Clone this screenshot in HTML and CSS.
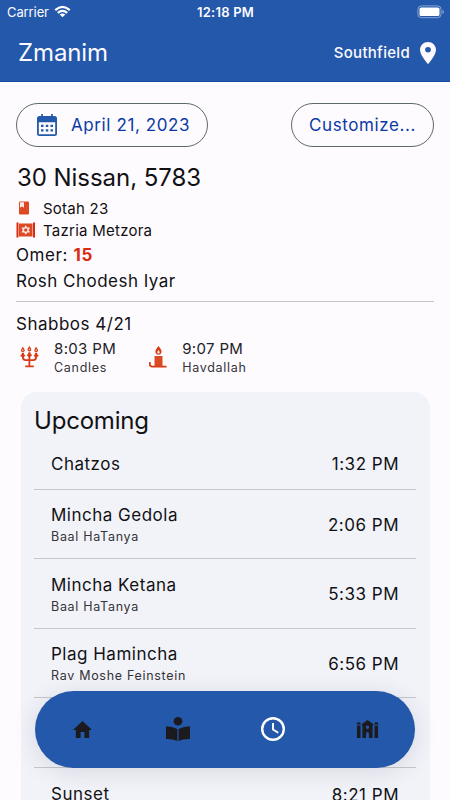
FILE: index.html
```html
<!DOCTYPE html>
<html lang="en">
<head>
<meta charset="utf-8">
<title>Zmanim</title>
<link rel="stylesheet" href="styles.css">
</head>
<body>
<div class="screen">
  <header class="header">
    <div class="status">
      <div class="carrier"><span>Carrier</span>
        <svg width="17" height="13" viewBox="0 0 18 13" fill="none" stroke="#fff" stroke-width="2.300"><path d="M1.300 5Q9-1.800 16.700 5M4 8Q9 3.600 14 8"/><path d="M9 12.600L6 9.600Q9 7.400 12 9.600Z" fill="#fff" stroke="none"/></svg>
      </div>
      <span class="clock">12:18 PM</span>
      <svg class="battery" width="28" height="14" viewBox="0 0 28 14"><rect x=".9" y=".9" width="23.200" height="11.800" rx="3.600" fill="none" stroke="#8aa5d3"/><rect x="2.500" y="2.500" width="20" height="8.600" rx="1.600" fill="#fff"/><path d="M25.500 4.800q1.500.8 1.500 2.100t-1.500 2.100z" fill="#8aa5d3"/></svg>
    </div>
    <div class="titlebar">
      <h1>Zmanim</h1>
      <div class="place"><span>Southfield</span>
        <svg width="16" height="22" viewBox="5 2 14 20" preserveAspectRatio="none"><path fill="#fdf8fd" d="M12 2C8.130 2 5 5.130 5 9c0 5.250 7 13 7 13s7-7.750 7-13c0-3.870-3.130-7-7-7zm0 9.500a2.500 2.500 0 0 1 0-5 2.500 2.500 0 0 1 0 5z"/></svg>
      </div>
    </div>
  </header>
  <main class="content">
    <div class="actions">
      <button class="pill date">
        <svg width="20" height="22" viewBox="0 0 20 22"><path fill="#2358aa" fill-rule="evenodd" d="M4.200 0h1.700v2h8.200V0h1.700v2H17.500Q20 2 20 4.500V19.500Q20 22 17.500 22H2.500Q0 22 0 19.500V4.500Q0 2 2.500 2H4.200zM1.800 8.300V20.200H18.200V8.300z"/><path fill="#2358aa" d="M4 10.800h2.500v2.200H4zM8.800 10.800h2.500v2.200H8.800zM13.500 10.800h2.500v2.200h-2.500zM4 15.200h2.500v2.200H4zM8.800 15.200h2.500v2.200H8.800zM13.500 15.200h2.500v2.200h-2.500z"/></svg>
        <span>April 21, 2023</span>
      </button>
      <button class="pill custom"><span>Customize...</span></button>
    </div>
    <h2 class="hebrew"><span>30 Nissan, 5783</span></h2>
    <div class="study">
      <svg width="20" height="14" viewBox="0 0 20 14"><path fill="#db4a22" d="M4 .5h8Q13 .5 13 1.500v11q0 1-1 1h-8Q3 13.500 3 12.500V1.500Q3 .5 4 .5z"/><path fill="#fce8e6" d="M4 1.200h4v5.600L6 5.500 4 6.800z"/></svg>
      <span>Sotah 23</span>
    </div>
    <div class="study torah">
      <svg width="20" height="16" viewBox="0 0 20 16"><path fill="#d92b10" d="M.5.500h2v15h-2zM17 .5h2v15h-2z"/><path fill="#db4a22" d="M3 1.500h13.500v13H3z"/><path fill="#fce8e6" d="M9.750 3.200l1.500 2.300h2.800L12.700 8l1.350 2.500h-2.800l-1.500 2.300-1.500-2.300h-2.800L6.800 8 5.450 5.500h2.800z"/><circle cx="9.750" cy="8" r="1.700" fill="#db4a22"/></svg>
      <span>Tazria Metzora</span>
    </div>
    <p class="line"><span class="omer">Omer: <b>15</b></span></p>
    <p class="line"><span>Rosh Chodesh Iyar</span></p>
    <section class="shabbos">
      <h3><span>Shabbos 4/21</span></h3>
      <div class="lights">
        <div class="light first">
          <svg width="19" height="22" viewBox="0 0 20 22"><g fill="none" stroke="#d93b16" stroke-width="1.900"><path d="M3 9v2q0 3.200 3 3.200h8q3 0 3-3.200V9M9.900 7v13.500M5.500 20.800h9M.6 9.600h4.800M7.500 9h4.800M14.600 9.600h4.800"/></g><path fill="#d93b16" d="M1.800 6.500h2.400v4.500H1.800zM8.700 6h2.400v5h-2.400zM15.800 6.500h2.400V11h-2.400z"/><g fill="#fefbff" stroke="#d93b16" stroke-width="1.400"><path d="M3 1.400q-2.600 3.600 0 3.600t0-3.600zM9.900.6q-2.600 3.800 0 3.800t0-3.800zM17 1.400q-2.600 3.600 0 3.600t0-3.600z"/></g></svg>
          <div><span class="time">8:03 PM</span><small>Candles</small></div>
        </div>
        <div class="light">
          <svg width="18" height="22" viewBox="0 0 18 22"><path fill="#d93b16" fill-rule="evenodd" d="M9.500 0Q5.800 4.400 6.500 6.600 7.200 8.800 9.500 8.800t3-2.200Q13.200 4.400 9.500 0zm0 4q2.300 3.400 0 3.400T9.500 4z"/><path fill="#db4a22" d="M5.500 10h8v10h-8z"/><path d="M.8 16v2q0 2.600 2.500 2.600H17.500" fill="none" stroke="#d93b16" stroke-width="1.700"/></svg>
          <div><span class="time">9:07 PM</span><small>Havdallah</small></div>
        </div>
      </div>
    </section>
    <section class="card">
      <h2><span>Upcoming</span></h2>
      <div class="row short"><div class="name"><span>Chatzos</span></div><span class="when">1:32 PM</span></div>
      <div class="row"><div class="name"><span>Mincha Gedola</span><small>Baal HaTanya</small></div><span class="when">2:06 PM</span></div>
      <div class="row"><div class="name"><span>Mincha Ketana</span><small>Baal HaTanya</small></div><span class="when">5:33 PM</span></div>
      <div class="row"><div class="name"><span>Plag Hamincha</span><small>Rav Moshe Feinstein</small></div><span class="when">6:56 PM</span></div>
      <div class="row"></div>
      <div class="row short last"><div class="name"><span>Sunset</span></div><span class="when">8:21 PM</span></div>
    </section>
  </main>
  <nav class="nav">
    <svg width="19" height="17" viewBox="2 3 20 17" preserveAspectRatio="none"><path fill="#1b1b1f" d="M10 20v-6h4v6h5v-8h3L12 3 2 12h3v8z"/></svg>
    <svg width="24" height="24" viewBox="0 0 24 24"><g fill="#1b1b1f"><circle cx="12" cy="4.300" r="4.300"/><path d="M0 9.300Q6.500 9.300 11.400 12V24Q6.500 21.700 0 22zM24 9.300Q17.500 9.300 12.600 12V24Q17.500 21.700 24 22z"/></g></svg>
    <svg width="24" height="24" viewBox="0 0 24 24" fill="none" stroke="#fff"><circle cx="12" cy="12" r="10.800" stroke-width="2.400"/><path d="M12 6v6.500l5.300 3.200" stroke-width="1.900"/></svg>
    <svg width="23" height="18" viewBox="0 0 24 18" preserveAspectRatio="none"><g fill="#1b1b1f"><path d="M1 5.500h3.700V18H1zM19.300 5.500H23V18h-3.700z"/><path d="M.8 4.500V3.200q2-2 4 0v1.300zM19.200 4.500V3.200q2-2 4 0v1.300z"/><path fill-rule="evenodd" d="M12 0l5.800 4v1.500l-.5.500V18h-3.800v-4q0-2-1.500-2t-1.500 2v4H6.700V6l-.5-.5V4zm0 5.500a1.700 1.700 0 1 0 .01 0z"/></g></svg>
  </nav>
</div>
</body>
</html>
```
FILE: styles.css
```css
* { box-sizing: border-box; }
body { margin: 0; font-family: Inter, sans-serif; color: #111114; background: #fefbff; }
h1, h2, h3, p { margin: 0; font-weight: 400; }
span, small { white-space: nowrap; }
svg { display: block; flex: none; }
.screen { position: relative; width: 450px; height: 800px; overflow: hidden; }
.header { height: 82px; background: #2358aa; color: #fdfbff; border-bottom: 1px solid #124b9f; }
.status { display: grid; grid-template-columns: 1fr auto 1fr; align-items: center; height: 23px; padding: 0 5px 0 7px; }
.carrier { display: flex; align-items: center; gap: 5px; font-size: 13px; letter-spacing: -.1px; }
.clock { font-size: 13px; font-weight: 600; letter-spacing: .25px; transform: translateX(-.5px); }
.battery { justify-self: end; }
.titlebar { display: flex; justify-content: space-between; align-items: center; height: 59px; padding: 0 14px 0 18px; }
.titlebar h1 { font-size: 24px; line-height: 30px; letter-spacing: -.1px; }
.place { display: flex; align-items: center; gap: 10px; font-size: 15px; font-weight: 500; letter-spacing: .3px; }
.content { padding: 21px 16px 0; }
.actions { display: flex; justify-content: space-between; height: 44px; }
.pill { display: flex; align-items: center; height: 44px; border: 1px solid #5f696c; border-radius: 22px; background: transparent; font: 400 17px Inter, sans-serif; letter-spacing: .6px; color: #0b3aa5; }
.date { width: 192px; padding: 0 0 0 20px; gap: 14px; }
.custom { width: 143px; padding: 0 0 0 17px; }
.hebrew { margin-top: 15px; padding-left: 1px; font-size: 24px; line-height: 32px; letter-spacing: -.05px; }
.study { display: flex; align-items: center; gap: 7px; height: 22px; margin-top: 3px; font-size: 15px; letter-spacing: .25px; }
.torah { margin: 0 0 1px; }
.line { font-size: 17px; line-height: 26px; letter-spacing: .48px; }
.omer { letter-spacing: .6px; }
.line b { color: #d92b10; font-weight: 700; }
.shabbos { margin-top: 7px; padding-top: 11px; border-top: 1px solid #c7c7cb; }
.shabbos h3 { font-size: 17px; line-height: 22px; letter-spacing: .5px; }
.lights { display: flex; gap: 33px; margin-top: 2px; }
.light { display: flex; align-items: center; gap: 15px; height: 40px; }
.first { padding-left: 4px; }
.light div { display: flex; flex-direction: column; padding-top: 1px; }
.time { font-size: 15px; line-height: 20px; letter-spacing: .35px; color: #222226; }
small { font-size: 12.500px; line-height: 18px; letter-spacing: .7px; color: #343438; }
.card { height: 460px; margin: 15px 4px 0 5px; padding: 12px 14px 12px 13px; border-radius: 16px; background: #f2f3f9; }
.card h2 { font-size: 24px; line-height: 34px; letter-spacing: -.2px; }
.row { display: flex; align-items: center; justify-content: space-between; height: 69.600px; padding: 2px 17px 0; border-bottom: 1px solid #c7c7cb; }
.short { height: 51.500px; }
.name { display: flex; flex-direction: column; padding-top: 1px; font-size: 17px; line-height: 23px; letter-spacing: .5px; }
.short .name { padding-top: 0; }
.name small { line-height: 19px; }
.when { font-size: 17px; letter-spacing: .5px; }
.last { border: 0; }
.nav { position: absolute; left: 35px; top: 691px; width: 380px; height: 77px; display: grid; grid-template-columns: repeat(4, 1fr); place-items: center; padding-bottom: 1px; border-radius: 38.500px; background: #2358aa; box-shadow: 0 4px 24px rgba(30, 35, 60, .13); }
```
